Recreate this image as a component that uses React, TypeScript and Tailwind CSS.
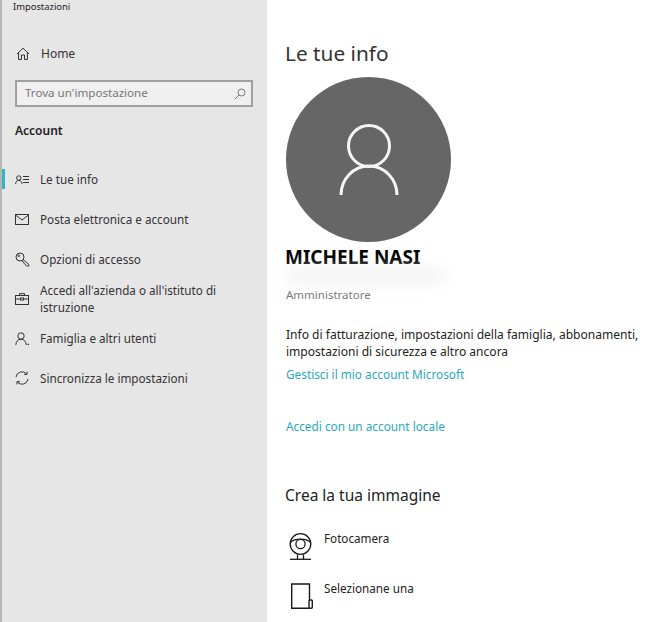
import React from 'react';

const font = { fontFamily: '"Noto Sans", "Open Sans", sans-serif' };

const HomeIcon = () => (
  <svg width="14" height="14" viewBox="0 0 14 14" fill="none" stroke="#333" strokeWidth="1">
    <path d="M1 7 L7 1.2 L13 7" />
    <path d="M2.6 5.8 V12.5 H5.5 V8 H8.5 V12.5 H11.4 V5.8" />
  </svg>
);

const InfoIcon = () => (
  <svg width="14" height="10" viewBox="0 0 14 10" fill="none" stroke="#333" strokeWidth="1">
    <circle cx="3.8" cy="3" r="2.2" />
    <path d="M0.6 9 C0.8 6.6 2 5.4 3.8 5.4 C5.6 5.4 6.8 6.6 7 9" />
    <path d="M8 1.5 H14 M8 4.5 H14 M8 7.5 H14" />
  </svg>
);

const MailIcon = () => (
  <svg width="14" height="11" viewBox="0 0 14 11" fill="none" stroke="#333" strokeWidth="1">
    <rect x="0.5" y="0.5" width="13" height="10" />
    <path d="M0.5 1 L7 6 L13.5 1" />
  </svg>
);

const KeyIcon = () => (
  <svg width="15" height="15" viewBox="0 0 15 15" fill="none" stroke="#333" strokeWidth="1">
    <circle cx="5" cy="5" r="4" />
    <circle cx="3.8" cy="3.8" r="0.8" />
    <path d="M8 7.6 L13.8 12.2 V14 H11.6 L6.8 8.6" />
  </svg>
);

const BriefcaseIcon = () => (
  <svg width="14" height="12" viewBox="0 0 14 12" fill="none" stroke="#333" strokeWidth="1">
    <rect x="0.5" y="2.5" width="13" height="9" />
    <path d="M4.5 2.5 V0.6 H9.5 V2.5" />
    <path d="M0.5 6 H5.5 M8.5 6 H13.5" />
    <rect x="5.5" y="5" width="3" height="2" />
  </svg>
);

const FamilyIcon = () => (
  <svg width="15" height="14" viewBox="0 0 15 14" fill="none" stroke="#333" strokeWidth="1">
    <circle cx="6" cy="4" r="3.2" />
    <path d="M0.8 13 C1 9.4 3 7.2 6 7.2 C9 7.2 11 9.4 11.2 13" />
    <circle cx="13.2" cy="12.4" r="0.8" fill="#333" stroke="none" />
  </svg>
);

const SyncIcon = () => (
  <svg width="14" height="14" viewBox="0 0 14 14" fill="none" stroke="#333" strokeWidth="1">
    <path d="M1 6 A6 6 0 0 1 11.6 3" />
    <path d="M13 8 A6 6 0 0 1 2.4 11" />
    <path d="M12 0.6 V3.4 H9.2" />
    <path d="M2 13.4 V10.6 H4.8" />
  </svg>
);

const SearchIcon = () => (
  <svg width="12" height="12" viewBox="0 0 12 12" fill="none" stroke="#777" strokeWidth="1">
    <circle cx="7.5" cy="4.5" r="3.5" />
    <path d="M5 7 L0.8 11.2" />
  </svg>
);

const WebcamIcon = () => (
  <svg width="25" height="27" viewBox="0 0 25 27" fill="none" stroke="#1a1a1a" strokeWidth="1.3">
    <circle cx="12.5" cy="11" r="10.3" />
    <circle cx="12.5" cy="11" r="4.6" />
    <path d="M2.2 9.5 C5.5 6.5 8.5 6.2 12.5 6.2 C16.5 6.2 19.5 6.5 22.8 9.5" />
    <path d="M9.5 21.5 V26 M15.5 21.5 V26" />
    <path d="M2 26.3 H23" />
  </svg>
);

const PickIcon = () => (
  <svg width="22" height="26" viewBox="0 0 22 26" fill="none" stroke="#1a1a1a" strokeWidth="1.4">
    <path d="M18.5 17 V1 H0.7 V25.3 H18" />
    <rect x="18" y="17" width="3.3" height="8.3" rx="1" />
  </svg>
);

const items = [
  { label: 'Le tue info', icon: <InfoIcon />, active: true },
  { label: 'Posta elettronica e account', icon: <MailIcon /> },
  { label: 'Opzioni di accesso', icon: <KeyIcon /> },
  { label: "Accedi all'azienda o all'istituto di istruzione", icon: <BriefcaseIcon /> },
  { label: 'Famiglia e altri utenti', icon: <FamilyIcon /> },
  { label: 'Sincronizza le impostazioni', icon: <SyncIcon /> },
];

export default function App() {
  return (
    <div className="flex w-[650px] h-[622px] overflow-hidden bg-white text-[#1a1a1a]" style={font}>
      {/* Sidebar */}
      <div className="w-[267px] h-full shrink-0 bg-[#e6e6e6] border-l-2 border-[#b5b5b5] flex flex-col">
        <div className="pl-[11px] pt-px text-[9.4px] leading-[12px] text-[#222]">Impostazioni</div>
        <div className="flex items-center h-[20px] mt-[31px] pl-[14px] gap-[11px] text-[12px] text-[#333]">
          <HomeIcon />
          <span>Home</span>
        </div>
        <div className="mx-[13px] mt-[16px] w-[238px] h-[27px] border-2 border-[#a0a0a0] bg-[#f0f0f0] flex items-center justify-between pl-[8px] pr-[5px] text-[11.6px] text-[#777]">
          <span className="pb-[2px]">Trova un'impostazione</span>
          <SearchIcon />
        </div>
        <div className="pl-[13px] mt-[15px] text-[12px] leading-[18px] font-semibold text-[#222]">Account</div>
        <div className="mt-[20px] flex flex-col">
          {items.map((item) => (
            <div key={item.label} className="relative flex items-center h-[39.7px] pl-[13px] text-[11.7px] leading-[17px] text-[#333]">
              {item.active && <div className="absolute left-0 top-[9px] w-[3px] h-[20px] bg-[#2fb4c8]" />}
              <div className="w-[25px] shrink-0 flex items-center">{item.icon}</div>
              <span className="w-[190px]">{item.label}</span>
            </div>
          ))}
        </div>
      </div>

      {/* Content */}
      <div className="flex-1 pl-[18px] flex flex-col">
        <h1 className="mt-[39px] text-[20.8px] leading-[28px] text-[#333]">Le tue info</h1>
        <div className="mt-[10px] ml-px w-[165px] h-[165px] rounded-full bg-[#666666] flex items-center justify-center">
          <svg width="60" height="71" viewBox="0 0 60 71" fill="none" stroke="#f5f5f5" strokeWidth="3">
            <circle cx="30" cy="22" r="20.5" />
            <path d="M2 71 A28 29 0 0 1 58 71" />
          </svg>
        </div>
        <div className="mt-[3px] text-[19px] leading-[24px] font-bold text-black">MICHELE NASI</div>
        <div className="mt-[1px] ml-px w-[160px] h-[12px] bg-[#f0f0f0] blur-sm" />
        <div className="mt-[5px] ml-px text-[11.5px] leading-[16px] text-[#777]">Amministratore</div>
        <div className="mt-[23px] ml-px w-[362px] text-[12.05px] leading-[17px] text-[#222]">
          Info di fatturazione, impostazioni della famiglia, abbonamenti, impostazioni di sicurezza e altro ancora
        </div>
        <div className="mt-[6px] ml-px text-[11.8px] leading-[17px] text-[#2aa9bb]">Gestisci il mio account Microsoft</div>
        <div className="mt-[35px] ml-px text-[11.8px] leading-[17px] text-[#2aa9bb]">Accedi con un account locale</div>
        <h2 className="mt-[50px] text-[15.5px] leading-[20px] text-[#222]">Crea la tua immagine</h2>
        <div className="mt-[25px] ml-[3px] flex items-start gap-[11px] h-[50px]">
          <div className="mt-[3px] flex"><WebcamIcon /></div>
          <span className="text-[11.7px] leading-[17px] text-[#222]">Fotocamera</span>
        </div>
        <div className="ml-[6px] flex items-start gap-[11px]">
          <div className="mt-[3px] flex"><PickIcon /></div>
          <span className="text-[11.7px] leading-[17px] text-[#222]">Selezionane una</span>
        </div>
      </div>
    </div>
  );
}
